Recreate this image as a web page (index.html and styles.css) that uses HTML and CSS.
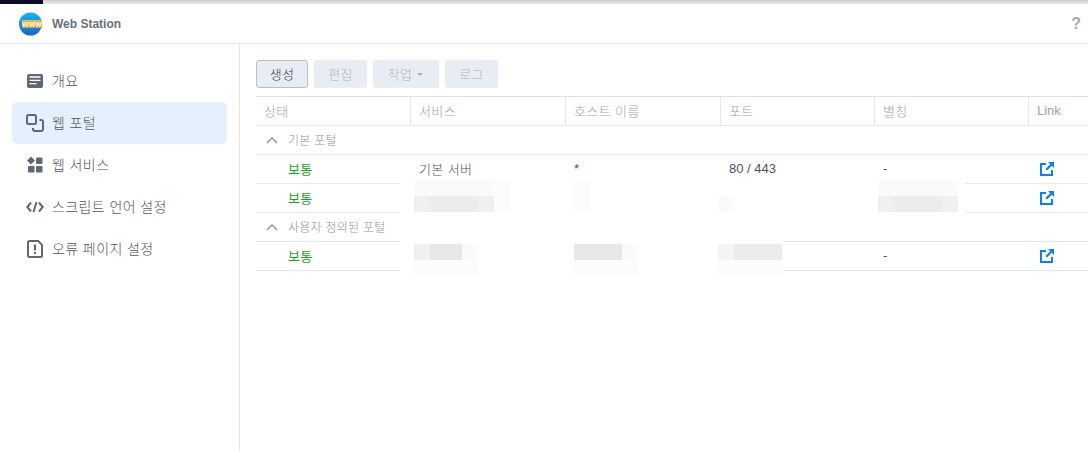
FILE: index.html
```html
<!DOCTYPE html>
<html lang="ko">
<head>
<meta charset="utf-8">
<title>Web Station</title>
<link rel="stylesheet" href="styles.css">
</head>
<body>
<div class="topstrip"><div class="topstrip-dark"></div></div>
<div class="window">
  <header class="titlebar">
    <svg class="logo" width="26" height="26" viewBox="0 0 26 26">
      <defs>
        <linearGradient id="globe" x1="0" y1="0" x2="0" y2="1">
          <stop offset="0" stop-color="#0cb6f8"/>
          <stop offset="0.6" stop-color="#0a8cec"/>
          <stop offset="1" stop-color="#1c62c8"/>
        </linearGradient>
        <linearGradient id="banner" x1="0" y1="0" x2="0" y2="1">
          <stop offset="0" stop-color="#f8b93a"/>
          <stop offset="1" stop-color="#e8921c"/>
        </linearGradient>
      </defs>
      <circle cx="13.500" cy="13" r="11.500" fill="url(#globe)"/>
      <rect x="5" y="9" width="20" height="8" fill="url(#banner)"/>
      <text x="15" y="15.500" class="logo-text" text-anchor="middle">WWW</text>
    </svg>
    <span class="app-name">Web Station</span>
    <span class="help">?</span>
  </header>
  <div class="body">
    <nav class="sidebar">
      <a class="nav-item">
        <svg class="nav-icon" viewBox="0 0 18 18"><rect x="1" y="2" width="16" height="14" rx="2" fill="#5f6873"/><path d="M3.500 5h11M3.500 8.300h11M3.500 11.600h7" stroke="#fff" stroke-width="1.300" fill="none"/></svg>
        <span>개요</span>
      </a>
      <a class="nav-item active">
        <svg class="nav-icon" viewBox="0 0 18 18"><rect x="1" y="1" width="9" height="9" rx="1.500" fill="none" stroke="#5f6873" stroke-width="2"/><path d="M13.500 6H15a2 2 0 0 1 2 2v7a2 2 0 0 1-2 2H9a2 2 0 0 1-2-2v-1" fill="none" stroke="#5f6873" stroke-width="2"/></svg>
        <span>웹 포털</span>
      </a>
      <a class="nav-item">
        <svg class="nav-icon" viewBox="0 0 18 18" fill="#5f6873"><path d="M5 .500l4 4-4 4-4-4z"/><rect x="10" y="1.500" width="6.500" height="6.500" rx="1"/><rect x="2" y="10" width="6.500" height="6.500" rx="1"/><rect x="10" y="10" width="6.500" height="6.500" rx="1"/></svg>
        <span>웹 서비스</span>
      </a>
      <a class="nav-item">
        <svg class="nav-icon" viewBox="0 0 18 18" fill="none" stroke="#5f6873" stroke-width="2"><path d="M5 4.500L1.300 9 5 13.500M13 4.500L16.700 9 13 13.500M10.500 4l-3 10"/></svg>
        <span>스크립트 언어 설정</span>
      </a>
      <a class="nav-item">
        <svg class="nav-icon" viewBox="0 0 18 18" fill="none"><path d="M3.500 1h8.700L16 4.800v10.700a1.500 1.500 0 0 1-1.500 1.500h-11A1.500 1.500 0 0 1 2 15.500v-13A1.500 1.500 0 0 1 3.500 1z" stroke="#5f6873" stroke-width="2"/><path d="M9 4.500v6" stroke="#5f6873" stroke-width="2"/><circle cx="9" cy="13" r="1.200" fill="#5f6873"/></svg>
        <span>오류 페이지 설정</span>
      </a>
    </nav>
    <main class="content">
      <div class="toolbar">
        <button class="btn primary">생성</button>
        <button class="btn disabled">편집</button>
        <button class="btn disabled wide">작업<i class="caret"></i></button>
        <button class="btn disabled">로그</button>
      </div>
      <div class="table">
        <div class="row head">
          <div class="cell">상태</div>
          <div class="cell">서비스</div>
          <div class="cell">호스트 이름</div>
          <div class="cell">포트</div>
          <div class="cell">별칭</div>
          <div class="cell latin">Link</div>
        </div>
        <div class="row group">
          <svg class="chevron" width="12" height="7" viewBox="0 0 12 7"><path d="M1 6l5-5 5 5" fill="none" stroke="#8f97a1" stroke-width="1.500"/></svg>
          <span>기본 포털</span>
        </div>
        <div class="row">
          <div class="cell status">보통</div>
          <div class="cell">기본 서버</div>
          <div class="cell latin">*</div>
          <div class="cell latin">80 / 443</div>
          <div class="cell latin">-</div>
          <div class="cell link"><svg class="ext" viewBox="0 0 14 14" width="14" height="14"><path d="M6 2H1v11h11V8" fill="none" stroke="#0b80ee" stroke-width="2"/><path d="M8 0h6v6L11.800 3.800 7 8.600 5.400 7l4.800-4.800z" fill="#0b80ee"/></svg></div>
        </div>
        <div class="row">
          <div class="cell status">보통</div>
          <div class="cell"></div>
          <div class="cell"></div>
          <div class="cell"></div>
          <div class="cell"></div>
          <div class="cell link"><svg class="ext" viewBox="0 0 14 14" width="14" height="14"><path d="M6 2H1v11h11V8" fill="none" stroke="#0b80ee" stroke-width="2"/><path d="M8 0h6v6L11.800 3.800 7 8.600 5.400 7l4.800-4.800z" fill="#0b80ee"/></svg></div>
        </div>
        <div class="row group">
          <svg class="chevron" width="12" height="7" viewBox="0 0 12 7"><path d="M1 6l5-5 5 5" fill="none" stroke="#8f97a1" stroke-width="1.500"/></svg>
          <span>사용자 정의된 포털</span>
        </div>
        <div class="row">
          <div class="cell status">보통</div>
          <div class="cell"></div>
          <div class="cell"></div>
          <div class="cell"></div>
          <div class="cell latin">-</div>
          <div class="cell link"><svg class="ext" viewBox="0 0 14 14" width="14" height="14"><path d="M6 2H1v11h11V8" fill="none" stroke="#0b80ee" stroke-width="2"/><path d="M8 0h6v6L11.800 3.800 7 8.600 5.400 7l4.800-4.800z" fill="#0b80ee"/></svg></div>
        </div>

        <div class="patch patch-a"></div>
        <div class="patch patch-b"></div>

        <div class="mosaic m-service-a">
          <i class="b"></i><i class="b"></i><i class="b"></i><i class="b"></i><i class="b"></i><i class="a"></i>
          <i class="c"></i><i class="d"></i><i class="d"></i><i class="d"></i><i class="c"></i><i class="a"></i>
        </div>
        <div class="mosaic m-host-a"><i class="a"></i><i class="a"></i></div>
        <div class="mosaic m-port-a"><i class="b"></i></div>
        <div class="mosaic m-alias-a">
          <i class="b"></i><i class="b"></i><i class="b"></i><i class="b"></i><i class="b"></i>
          <i class="c"></i><i class="d"></i><i class="d"></i><i class="d"></i><i class="c"></i>
        </div>
        <div class="mosaic m-service-b">
          <i class="c"></i><i class="e"></i><i class="e"></i><i class="b"></i>
          <i class="a"></i><i class="a"></i><i class="a"></i><i class="a"></i>
        </div>
        <div class="mosaic m-host-b">
          <i class="e"></i><i class="e"></i><i class="e"></i><i class="b"></i>
          <i class="a"></i><i class="a"></i><i class="a"></i><i class="a"></i>
        </div>
        <div class="mosaic m-port-b">
          <i class="f"></i><i class="d"></i><i class="d"></i><i class="d"></i>
          <i class="a"></i><i class="a"></i><i class="a"></i><i class="a"></i>
        </div>
      </div>
    </main>
  </div>
</div>
</body>
</html>
```
FILE: styles.css
```css
* { box-sizing: border-box; }
html, body { margin: 0; padding: 0; height: 100%; overflow: hidden; }
body {
  width: 1088px;
  height: 451px;
  background: #fff;
  font-family: "Liberation Sans", "Noto Sans CJK KR", sans-serif;
  font-weight: 300;
  color: #4a5260;
  display: flex;
  flex-direction: column;
}
.topstrip { height: 4px; flex: none; background: linear-gradient(#cfcfcf, #e6e6e6); }
.topstrip-dark { width: 43px; height: 4px; background: #0b0b2b; }
.window { flex: 1; display: flex; flex-direction: column; min-height: 0; background: #fff; }
.titlebar {
  height: 40px;
  flex: none;
  display: flex;
  align-items: center;
  padding-left: 17px;
  border-bottom: 1px solid #e4e8ee;
}
.logo { flex: none; margin-right: 9px; }
.logo-text { font-family: "Liberation Sans", sans-serif; font-size: 7px; font-weight: 700; fill: #fff; }
.app-name { font-size: 12px; font-weight: 700; color: #66707c; }
.help { margin-left: auto; margin-right: 7px; font-size: 16px; font-weight: 700; color: #a4a9b1; }
.body { flex: 1; display: flex; min-height: 0; }
.sidebar {
  width: 240px;
  flex: none;
  border-right: 1px solid #e4e8ee;
  padding: 16px 12px 0;
  display: flex;
  flex-direction: column;
}
.nav-item {
  width: 215px;
  height: 42px;
  display: flex;
  align-items: center;
  gap: 8px;
  padding-left: 14px;
  border-radius: 5px;
  font-size: 14px;
  letter-spacing: .4px;
  color: #4f5763;
}
.nav-item span { padding-bottom: 2px; }
.nav-item.active { background: #e4f0fc; }
.nav-icon { width: 18px; height: 18px; flex: none; overflow: visible; }
.content { flex: 1; min-width: 0; padding: 16px 0 0 16px; }
.toolbar { display: flex; gap: 6px; height: 28px; }
.btn {
  height: 28px;
  width: 53px;
  border: 0;
  border-radius: 3px;
  padding: 0 0 2px;
  font-family: inherit;
  font-weight: inherit;
  font-size: 13px;
  letter-spacing: .4px;
  background: #e8edf4;
  display: flex;
  align-items: center;
  justify-content: center;
}
.btn.primary { width: 52px; border: 1px solid #b6c0cc; color: #363e4a; }
.btn.disabled { color: #aeb4bd; }
.btn.wide { width: 66px; }
.caret {
  display: inline-block;
  margin: 2px 1px 0 5px;
  border-left: 3.500px solid transparent;
  border-right: 3.500px solid transparent;
  border-top: 3.500px solid #aeb4bd;
}
.table { position: relative; margin-top: 8px; width: 832px; border-top: 1px solid #d9e3ee; }
.row {
  display: grid;
  grid-template-columns: 155px 155px 155px 154px 154px 1fr;
  height: 29px;
  border-bottom: 1px solid #e4e9f0;
  font-size: 13px;
  letter-spacing: .4px;
  color: #4a5260;
}
.cell { display: flex; align-items: center; padding: 0 0 2px 8px; min-width: 0; white-space: nowrap; }
.latin { letter-spacing: 0; }
.row.head { height: 29px; color: #9aa1ab; }
.head .cell { border-right: 1px solid #e4e9f0; }
.head .cell:last-child { border-right: 0; }
.status { padding-left: 32px; color: #19a51f; font-weight: 400; }
.link { padding: 0 0 0 11px; }
.ext { display: block; }
.row.group {
  display: flex;
  align-items: center;
  padding-left: 10px;
  gap: 10px;
  font-size: 12px;
  letter-spacing: .25px;
  color: #8c939d;
}
.row.group span { padding-bottom: 2px; }
.chevron { flex: none; }

/* redaction overlays */
.patch { position: absolute; left: 144px; background: #fff; }
.patch-a { top: 83px; width: 565px; height: 33px; }
.patch-b { top: 141px; width: 383px; height: 34px; }
.mosaic {
  position: absolute;
  display: grid;
  grid-auto-rows: 16px;
  grid-template-columns: repeat(var(--cols), 16px);
}
.mosaic i { display: block; }
.mosaic .a { background: #fcfcfc; }
.mosaic .b { background: #fafafa; }
.mosaic .c { background: #f0f0f0; }
.mosaic .d { background: #ebecec; }
.mosaic .e { background: #e6e7e8; }
.mosaic .f { background: #f4f4f4; }
.m-service-a { --cols: 6; left: 158px; top: 83px; }
.m-host-a { --cols: 1; left: 318px; top: 83px; }
.m-port-a { --cols: 1; left: 462px; top: 99px; }
.m-alias-a { --cols: 5; left: 622px; top: 83px; }
.m-service-b { --cols: 4; left: 158px; top: 147px; }
.m-host-b { --cols: 4; left: 318px; top: 147px; }
.m-port-b { --cols: 4; left: 462px; top: 147px; }
```
